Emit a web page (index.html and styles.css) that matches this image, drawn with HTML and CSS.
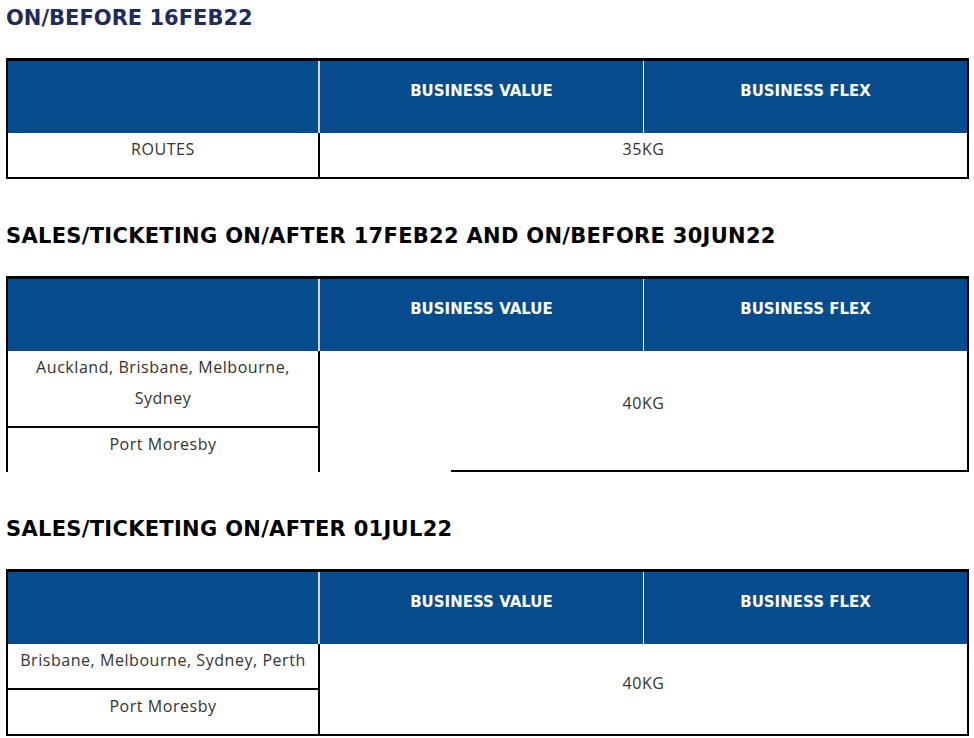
FILE: index.html
```html
<!DOCTYPE html>
<html lang="en">
<head>
<meta charset="utf-8">
<title>Baggage allowance</title>
<link rel="stylesheet" href="styles.css">
</head>
<body>
<main class="page">
  <section class="block">
    <h2 class="title title-navy">ON/BEFORE 16FEB22</h2>
    <table class="fares">
      <colgroup><col class="c1"><col class="c2"><col class="c3"></colgroup>
      <thead>
        <tr><th class="h-blank"></th><th class="h-mid">BUSINESS VALUE</th><th>BUSINESS FLEX</th></tr>
      </thead>
      <tbody>
        <tr><td class="route">ROUTES</td><td class="kg" colspan="2">35KG</td></tr>
      </tbody>
    </table>
  </section>

  <section class="block">
    <h2 class="title">SALES/TICKETING ON/AFTER 17FEB22 AND ON/BEFORE 30JUN22</h2>
    <table class="fares fares-open">
      <colgroup><col class="c1"><col class="c2"><col class="c3"></colgroup>
      <thead>
        <tr><th class="h-blank"></th><th class="h-mid">BUSINESS VALUE</th><th>BUSINESS FLEX</th></tr>
      </thead>
      <tbody>
        <tr><td class="route wrap">Auckland, Brisbane, Melbourne, Sydney</td><td class="kg kg-partial" colspan="2" rowspan="2">40KG</td></tr>
        <tr><td class="route split">Port Moresby</td></tr>
      </tbody>
    </table>
  </section>

  <section class="block">
    <h2 class="title">SALES/TICKETING ON/AFTER 01JUL22</h2>
    <table class="fares">
      <colgroup><col class="c1"><col class="c2"><col class="c3"></colgroup>
      <thead>
        <tr><th class="h-blank"></th><th class="h-mid">BUSINESS VALUE</th><th>BUSINESS FLEX</th></tr>
      </thead>
      <tbody>
        <tr><td class="route">Brisbane, Melbourne, Sydney, Perth</td><td class="kg" colspan="2" rowspan="2">40KG</td></tr>
        <tr><td class="route split">Port Moresby</td></tr>
      </tbody>
    </table>
  </section>
</main>
</body>
</html>
```

FILE: styles.css
```css
html, body {
  margin: 0;
  padding: 0;
  background: #ffffff;
}

.page {
  display: flex;
  flex-direction: column;
  gap: 39px;
  padding: 0 5px 0 6px;
  font-family: "Open Sans", "Liberation Sans", sans-serif;
  color: #333333;
}

.block {
  display: flex;
  flex-direction: column;
  gap: 22px;
}

.title {
  margin: 0;
  font-family: "DejaVu Sans", sans-serif;
  font-weight: 700;
  font-size: 21px;
  line-height: 36px;
  color: #000000;
  letter-spacing: 0.3px;
}

.title-navy {
  color: #1f2b5b;
  letter-spacing: 0;
}

.fares {
  width: 963px;
  border-collapse: separate;
  border-spacing: 0;
  table-layout: fixed;
  border-style: solid;
  border-color: #000000;
  border-width: 3px 2px 2px 2px;
}

.fares-open {
  border-bottom-width: 0;
}

.c1 { width: 312px; }
.c2 { width: 324px; }
.c3 { width: 323px; }

.fares th {
  height: 72px;
  box-sizing: border-box;
  padding: 20px 10px 32px;
  background: #064b8c;
  color: #ffffff;
  font-family: "DejaVu Sans", sans-serif;
  font-weight: 700;
  font-size: 15px;
  line-height: 20px;
  text-align: center;
  vertical-align: top;
}

.fares th.h-blank {
  border-right: 2px solid #d4d4d4;
}

.fares th.h-mid {
  border-right: 1px solid #ffffff;
}

.fares td {
  padding: 1px 10px 12px;
  font-size: 16px;
  letter-spacing: 0.55px;
  line-height: 31px;
  text-align: center;
  vertical-align: middle;
  color: #333333;
}

.fares td.route {
  border-right: 2px solid #000000;
}

.fares td.split {
  border-top: 2px solid #000000;
}

.fares td.wrap {
  padding-left: 24px;
  padding-right: 24px;
}

.fares td.kg-partial {
  padding-bottom: 17px;
  background: linear-gradient(#000000, #000000) no-repeat right bottom / calc(100% - 131px) 2px;
}
```
